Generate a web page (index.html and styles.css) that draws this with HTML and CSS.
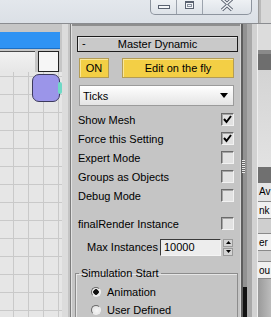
FILE: index.html
```html
<!DOCTYPE html>
<html>
<head>
<meta charset="utf-8">
<link rel="stylesheet" href="styles.css">
</head>
<body>
<div class="titlebar">
  <div class="winbtns">
    <span class="wb wb-min"><span class="ico-min"></span></span>
    <span class="wb wb-max"><span class="ico-max"></span></span>
    <span class="wb wb-close">
      <svg width="14" height="12" viewBox="0 0 14 12"><path d="M2 -1 L7 3.5 L12 -1 M2 10 L7 5.5 L12 10" fill="none" stroke="#5a6270" stroke-width="3.2"/><path d="M2 -1 L7 3.5 L12 -1 M2 10 L7 5.5 L12 10" fill="none" stroke="#f4f6f8" stroke-width="1.4"/></svg>
    </span>
  </div>
  <div class="tb-right"></div>
</div>
<div class="main">
  <div class="viewport">
    <div class="bluebar"></div>
    <div class="vp-row"><div class="vp-field"></div><div class="vp-box"></div></div>
    <div class="grid">
      <div class="node"></div>
      <div class="node-pin"></div>
    </div>
  </div>
  <div class="sep"></div>
  <div class="panel">
    <div class="rollout-head"><span class="minus">-</span><span class="rh-title">Master Dynamic</span></div>
    <div class="btnrow">
      <div class="ybtn on">ON</div>
      <div class="ybtn edit">Edit on the fly</div>
    </div>
    <div class="dropdown"><span>Ticks</span><svg class="dd-arrow" width="8" height="5" viewBox="0 0 8 5"><path d="M0 0 H8 L4 5 Z" fill="#000"/></svg></div>
    <div class="rows">
      <div class="row"><span>Show Mesh</span><span class="cb"><svg width="11" height="11" viewBox="0 0 11 11"><path d="M2 5 L4.5 8 L9 2" fill="none" stroke="#000" stroke-width="2"/></svg></span></div>
      <div class="row"><span>Force this Setting</span><span class="cb"><svg width="11" height="11" viewBox="0 0 11 11"><path d="M2 5 L4.5 8 L9 2" fill="none" stroke="#000" stroke-width="2"/></svg></span></div>
      <div class="row"><span>Expert Mode</span><span class="cb"></span></div>
      <div class="row"><span>Groups as Objects</span><span class="cb"></span></div>
      <div class="row"><span>Debug Mode</span><span class="cb"></span></div>
      <div class="row row-fr"><span>finalRender Instance</span><span class="cb"></span></div>
    </div>
    <div class="maxrow">
      <span class="mi-label">Max Instances</span>
      <span class="input">10000</span>
      <span class="spinner">
        <span class="sp"><svg width="5" height="3" viewBox="0 0 5 3"><path d="M0 3 L2.5 0 L5 3 Z" fill="#000"/></svg></span>
        <span class="sp"><svg width="5" height="3" viewBox="0 0 5 3"><path d="M0 0 L2.5 3 L5 0 Z" fill="#000"/></svg></span>
      </span>
    </div>
    <fieldset class="group">
      <legend>Simulation Start</legend>
      <div class="radio-row"><span class="radio checked"></span><span>Animation</span></div>
      <div class="radio-row"><span class="radio"></span><span>User Defined</span></div>
    </fieldset>
  </div>
  <div class="strips">
    <div class="grip"></div>
    <div class="strip-dark"></div>
  </div>
  <div class="side">
    <div class="s-a"></div>
    <div class="s-dark"></div>
    <div class="s-b"></div>
    <div class="s-dark2"></div>
    <div class="s-txt">Av</div>
    <div class="s-txt s-line">nk</div>
    <div class="s-gap"></div>
    <div class="s-txt s-line">er</div>
    <div class="s-gap2"></div>
    <div class="s-txt s-line">ou</div>
    <div class="s-bottom"></div>
  </div>
</div>
</body>
</html>
```

FILE: styles.css
```css
* { box-sizing: border-box; }
html, body { margin: 0; padding: 0; }
body {
  width: 271px;
  height: 317px;
  overflow: hidden;
  background: #c5c5c5;
  font-family: "Liberation Sans", Arial, sans-serif;
  font-size: 11px;
  color: #000;
}

/* title bar */
.titlebar {
  height: 24px;
  display: flex;
  background: linear-gradient(#e3e7ec, #dbe0e6);
  border-bottom: 1px solid #8a8c90;
}
.winbtns {
  margin-left: 150px;
  width: 102px;
  height: 15px;
  display: flex;
  border: 1px solid #8d949e;
  border-top: none;
  border-radius: 0 0 5px 5px;
  background: linear-gradient(#eef1f4, #dde2e8);
  overflow: hidden;
}
.wb {
  display: flex;
  align-items: flex-start;
  justify-content: center;
  border-right: 1px solid #9ca3ad;
}
.wb-min { width: 26px; padding-top: 5px; }
.wb-max { width: 26px; padding-top: 1px; }
.wb-close { flex: 1; border-right: none; }
.ico-min {
  width: 12px; height: 4px;
  border: 1px solid #5a6270;
  background: #f4f6f8;
}
.ico-max {
  width: 9px; height: 8px;
  border: 1px solid #5a6270;
  border-top-width: 2px;
  background: #f4f6f8;
  box-shadow: inset 0 0 0 1px #f4f6f8, inset 0 0 0 2px #8a92a0;
}
.tb-right {
  margin-left: 6px;
  flex: 1;
  border-left: 1px solid #9a9a9a;
  background: linear-gradient(90deg, #b9b9b9 0 2px, #d8d8d8 2px);
}

/* main */
.main {
  display: flex;
  height: 293px;
  overflow: hidden;
}
.viewport {
  width: 62px;
  display: flex;
  flex-direction: column;
  padding-top: 8px;
  background: #c6c6c6;
}
.viewport > * { flex-shrink: 0; }
.bluebar {
  width: 60px;
  height: 17px;
  background: #2f93f4;
  border-bottom: 1px solid #1c6fc4;
}
.vp-row {
  margin-top: 2px;
  height: 21px;
  display: flex;
  gap: 3px;
}
.vp-field {
  width: 35px;
  border-top: 1px solid #4a4a4a;
  background: linear-gradient(#f2f2f2, #e6e6e6);
}
.vp-box {
  width: 21px;
  background: #f6f6f6;
  border: 1px solid #222;
}
.grid {
  position: relative;
  flex: 1 1 auto;
  background-color: #e6e6e6;
  background-image:
    linear-gradient(90deg, transparent 13px, #c9c9c9 13px, #c9c9c9 14px, transparent 14px),
    linear-gradient(transparent 4px, #c9c9c9 4px, #c9c9c9 5px, transparent 5px);
  background-size: 15px 100%, 100% 18px;
  background-position: 0 0, 0 0;
}
.node {
  position: absolute;
  left: 32px;
  top: 2px;
  width: 28px;
  height: 28px;
  border-radius: 7px;
  background: #9b95e9;
  border: 1px solid #3c3a5c;
}
.node-pin {
  position: absolute;
  left: 58px;
  top: 10px;
  width: 4px;
  height: 12px;
  border-radius: 2px;
  background: #6fd9c6;
}
.sep {
  width: 10px;
  flex-shrink: 0;
  background: linear-gradient(90deg, #dcdcdc 0 6px, #c4c4c4 6px 8px, #7c7c7c 8px 9px, #e2e2e2 9px);
}

/* panel */
.panel {
  width: 168px;
  flex-shrink: 0;
  display: flex;
  flex-direction: column;
  padding-top: 10px;
  background: #c5c5c5;
  border-top: 2px solid #8e8e8e;
  overflow: hidden;
}
.panel > * { flex-shrink: 0; }
.rollout-head {
  margin-left: 5px;
  width: 161px;
  height: 16px;
  display: flex;
  align-items: center;
  position: relative;
  background: #c9c9c9;
  border: 1px solid #1c1c1c;
  box-shadow: inset 1px 1px 0 #e6e6e6;
}
.minus {
  position: absolute;
  left: 4px;
  top: 0;
  line-height: 13px;
}
.rh-title {
  flex: 1;
  text-align: center;
  line-height: 14px;
}
.btnrow {
  margin-top: 6px;
  margin-left: 7px;
  display: flex;
  gap: 13px;
}
.ybtn {
  height: 20px;
  display: flex;
  align-items: center;
  justify-content: center;
  background: #f3cf45;
  border: 1px solid #b39c55;
  box-shadow: inset 1px 1px 0 #f9e79a;
}
.on { width: 30px; }
.edit { width: 112px; }
.dropdown {
  margin-top: 7px;
  margin-left: 7px;
  width: 155px;
  height: 21px;
  display: flex;
  align-items: center;
  justify-content: space-between;
  padding: 0 5px 0 3px;
  background: linear-gradient(#ffffff, #e4e4e4);
  border: 1px solid #9b9b9b;
}
.dd-arrow { display: block; }
.rows {
  margin-top: 4px;
  display: flex;
  flex-direction: column;
}
.row {
  height: 19px;
  flex-shrink: 0;
  display: flex;
  align-items: center;
  justify-content: space-between;
  padding: 0 6px 0 6px;
}
.row-fr { margin-top: 9px; }
.cb {
  width: 13px;
  height: 13px;
  display: flex;
  align-items: center;
  justify-content: center;
  background: #e2e2e2;
  border-top: 1px solid #6a6a6a;
  border-left: 1px solid #6a6a6a;
  border-right: 1px solid #f2f2f2;
  border-bottom: 1px solid #f2f2f2;
  box-shadow: inset 1px 1px 0 #a5a5a5;
}
.cb svg { display: block; }
.maxrow {
  margin-top: 4px;
  height: 20px;
  display: flex;
  align-items: center;
  padding-left: 15px;
}
.mi-label { width: 73px; }
.input {
  width: 61px;
  height: 17px;
  display: flex;
  align-items: center;
  padding-left: 3px;
  background: #ededed;
  border-top: 1px solid #3a3a3a;
  border-left: 1px solid #3a3a3a;
  border-right: 1px solid #f4f4f4;
  border-bottom: 1px solid #f4f4f4;
}
.spinner {
  margin-left: 2px;
  width: 10px;
  height: 17px;
  display: flex;
  flex-direction: column;
  gap: 1px;
}
.sp {
  flex: 1;
  display: flex;
  align-items: center;
  justify-content: center;
  background: #d4d4d4;
  border: 1px solid #9a9a9a;
}
.sp svg { display: block; }
.group {
  margin: 10px 2px 0 3px;
  padding: 3px 0 20px 0;
  border: 1px solid #8c8c8c;
  border-bottom: none;
  box-shadow: inset 1px 1px 0 #e6e6e6;
  min-width: 0;
}
.group legend {
  margin-left: 3px;
  padding: 0 2px;
  line-height: 13px;
}
.radio-row {
  height: 18px;
  display: flex;
  align-items: center;
  gap: 6px;
  padding-left: 15px;
}
.radio {
  width: 10px;
  height: 10px;
  border-radius: 50%;
  background: radial-gradient(circle at 60% 60%, #f6f6f6, #dcdcdc);
  border: 1px solid;
  border-color: #6a6a6a #f0f0f0 #f0f0f0 #6a6a6a;
}
.radio.checked {
  background: radial-gradient(circle, #111 0 2.5px, #ececec 3px);
}

/* scroll strips */
.strips {
  width: 18px;
  flex-shrink: 0;
  position: relative;
  background: linear-gradient(90deg, #d6d6d6 0 1px, #5e5e5e 1px 3px, #929292 3px 7px, #a9a9a9 7px 12px, #d2d2d2 12px 17px, #efefef 17px);
}
.grip {
  position: absolute;
  left: 2px;
  top: 136px;
  width: 3px;
  height: 13px;
  background: repeating-linear-gradient(#e8e8e8 0 1px, #666 1px 2px);
}
.strip-dark {
  position: absolute;
  left: 3px;
  top: 263px;
  width: 4px;
  bottom: 0;
  background: #111;
}
.side {
  flex: 1;
  display: flex;
  flex-direction: column;
  background: #d9d9d9;
  overflow: hidden;
  white-space: nowrap;
}
.side > * { flex-shrink: 0; }
.s-a { height: 26px; background: #dcdcdc; }
.s-dark { height: 20px; background: #6e6e6e; border-top: 4px solid #8a8a8a; }
.s-b { height: 97px; background: linear-gradient(#d4d4d4, #e2e2e2); }
.s-dark2 { height: 16px; background: #707070; }
.s-txt {
  height: 18px;
  line-height: 18px;
  padding-left: 1px;
  font-size: 10px;
  background: #e4e4e4;
}
.s-line { border-top: 1px solid #8a8a8a; border-bottom: 1px solid #8a8a8a; background: #f0f0f0; }
.s-gap { height: 14px; background: #cfcfcf; }
.s-gap2 { height: 10px; background: #cfcfcf; }
.s-bottom { flex: 1 1 auto; min-height: 30px; background: linear-gradient(90deg, #9a9a9a, #bcbcbc); }
```
